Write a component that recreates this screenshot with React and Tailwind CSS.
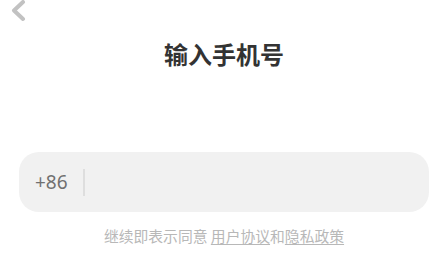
import React from "react";

function BackIcon() {
  return (
    <svg width="20" height="24" viewBox="0 0 20 24" className="block">
      <path
        d="M15 3 L6 11.5 L15 20"
        fill="none"
        stroke="#c2c2c2"
        strokeWidth="4"
        strokeLinecap="round"
        strokeLinejoin="round"
      />
    </svg>
  );
}

export default function App() {
  return (
    <div
      className="w-full h-[259px] bg-white overflow-hidden flex flex-col"
      style={{ fontFamily: '"Noto Sans", "Noto Sans CJK SC", sans-serif' }}
    >
      {/* nav */}
      <div className="h-[22px] flex items-start pl-[8px] -mt-[1px]">
        <button className="p-0 bg-transparent">
          <BackIcon />
        </button>
      </div>

      <h1
        className="mt-[21px] text-center text-[24px] leading-[24px] font-bold text-[#333333]"
        style={{ fontFamily: '"Noto Sans CJK SC", sans-serif' }}
      >
        输入手机号
      </h1>

      {/* phone input */}
      <div className="mt-[86px] mx-[19px] h-[60px] rounded-[20px] bg-[#f1f1f1] flex items-center pl-[16px]">
        <span className="text-[19px] text-[#707070] leading-none">+86</span>
        <span className="ml-[15px] w-[2px] h-[27px] bg-[#dedede]" />
        <input
          className="flex-1 h-full bg-transparent outline-none px-3 text-[18px] text-[#333]"
          type="tel"
        />
      </div>

      <p
        className="mt-[14px] text-center text-[14.8px] leading-[20px] text-[#b8b8b8]"
        style={{ fontFamily: '"Noto Sans CJK SC", sans-serif' }}
      >
        继续即表示同意{" "}
        <a className="underline underline-offset-2">用户协议</a>和
        <a className="underline underline-offset-2">隐私政策</a>
      </p>
    </div>
  );
}
